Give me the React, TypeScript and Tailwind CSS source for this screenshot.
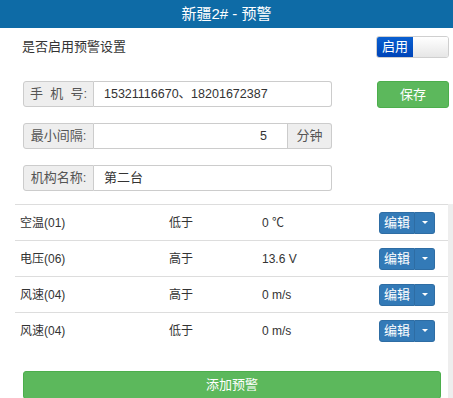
const FONT = { fontFamily: '"Liberation Sans", "Noto Sans CJK SC", sans-serif' };

interface Rule {
  name: string;
  cond: string;
  value: string;
}

const rules: Rule[] = [
  { name: '空温(01)', cond: '低于', value: '0 ℃' },
  { name: '电压(06)', cond: '高于', value: '13.6 V' },
  { name: '风速(04)', cond: '高于', value: '0 m/s' },
  { name: '风速(04)', cond: '低于', value: '0 m/s' },
];

function Addon({ children, right }: { children: React.ReactNode; right?: boolean }) {
  return (
    <span
      className={
        'flex items-center justify-center bg-[#eeeeee] text-[#555] border border-[#cccccc] text-[13px] ' +
        (right ? 'w-[44px] rounded-r-[3px] border-l-0' : 'w-[71px] rounded-l-[3px]')
      }
    >
      {children}
    </span>
  );
}

function EditButton() {
  return (
    <div className="flex h-[22px]">
      <button className="w-[36px] bg-[#337ab7] border border-[#2e6da4] rounded-l-[3px] text-white text-[13px] leading-none">
        编辑
      </button>
      <button className="w-[20px] bg-[#337ab7] border border-[#2e6da4] border-l-0 rounded-r-[3px] flex items-center justify-center">
        <span className="w-0 h-0 border-l-[3px] border-r-[3px] border-t-[3px] border-l-transparent border-r-transparent border-t-white" />
      </button>
    </div>
  );
}

export default function App() {
  return (
    <div className="w-[453px] h-[398px] overflow-hidden bg-white text-[#333] text-[12px]" style={FONT}>
      <div className="h-[28px] bg-[#0e6ba6] text-white text-[15px] flex items-center justify-center">
        新疆2# - 预警
      </div>

      <div className="flex items-center justify-between pl-[22px] pr-[4px] pt-[8px]">
        <span className="text-[13px]">是否启用预警设置</span>
        <div className="flex w-[73px] h-[22px] rounded-[3px] border border-[#cfcfcf] overflow-hidden">
          <span className="w-[36px] bg-gradient-to-b from-[#0a5fd0] to-[#0044b8] text-white text-[13px] flex items-center justify-center">
            启用
          </span>
          <span className="flex-1 bg-gradient-to-b from-[#ffffff] to-[#e6e6e6]" />
        </div>
      </div>

      <div className="flex items-start pl-[23px] pr-[4px] mt-[23px]">
        <div className="flex flex-col gap-[16px]">
          <div className="flex h-[26px] w-[309px]">
            <Addon>手&nbsp;&nbsp;机&nbsp;&nbsp;号:</Addon>
            <div className="flex-1 flex items-center px-[10px] border border-l-0 border-[#cccccc] rounded-r-[3px] text-[12.5px]">
              15321116670、18201672387
            </div>
          </div>
          <div className="flex h-[26px] w-[309px]">
            <Addon>最小间隔:</Addon>
            <div className="flex-1 flex items-center justify-end px-[20px] border border-l-0 border-[#cccccc] text-[12.5px]">
              5
            </div>
            <Addon right>分钟</Addon>
          </div>
          <div className="flex h-[26px] w-[309px]">
            <Addon>机构名称:</Addon>
            <div className="flex-1 flex items-center px-[10px] border border-l-0 border-[#cccccc] rounded-r-[3px] text-[13px]">
              第二台
            </div>
          </div>
        </div>
        <button className="ml-auto w-[72px] h-[27px] bg-[#5cb85c] border border-[#4cae4c] rounded-[3px] text-white text-[13px]">
          保存
        </button>
      </div>

      <div className="flex mt-[13px] h-[200px]">
        <div className="flex-1 pl-[15px] flex flex-col">
          {rules.map((r, i) => (
            <div key={i} className="flex items-center h-[36px] border-t border-[#dddddd]">
              <span className="w-[154px] pl-[5px]">{r.name}</span>
              <span className="w-[93px]">{r.cond}</span>
              <span className="w-[117px]">{r.value}</span>
              <EditButton />
            </div>
          ))}
          <button className="mt-[23px] ml-[8px] w-[418px] h-[28px] bg-[#5cb85c] border border-[#4cae4c] rounded-[3px] text-white text-[13px]">
            添加预警
          </button>
        </div>
        <div className="w-[5px] bg-[#eeeeee]" />
      </div>
    </div>
  );
}
